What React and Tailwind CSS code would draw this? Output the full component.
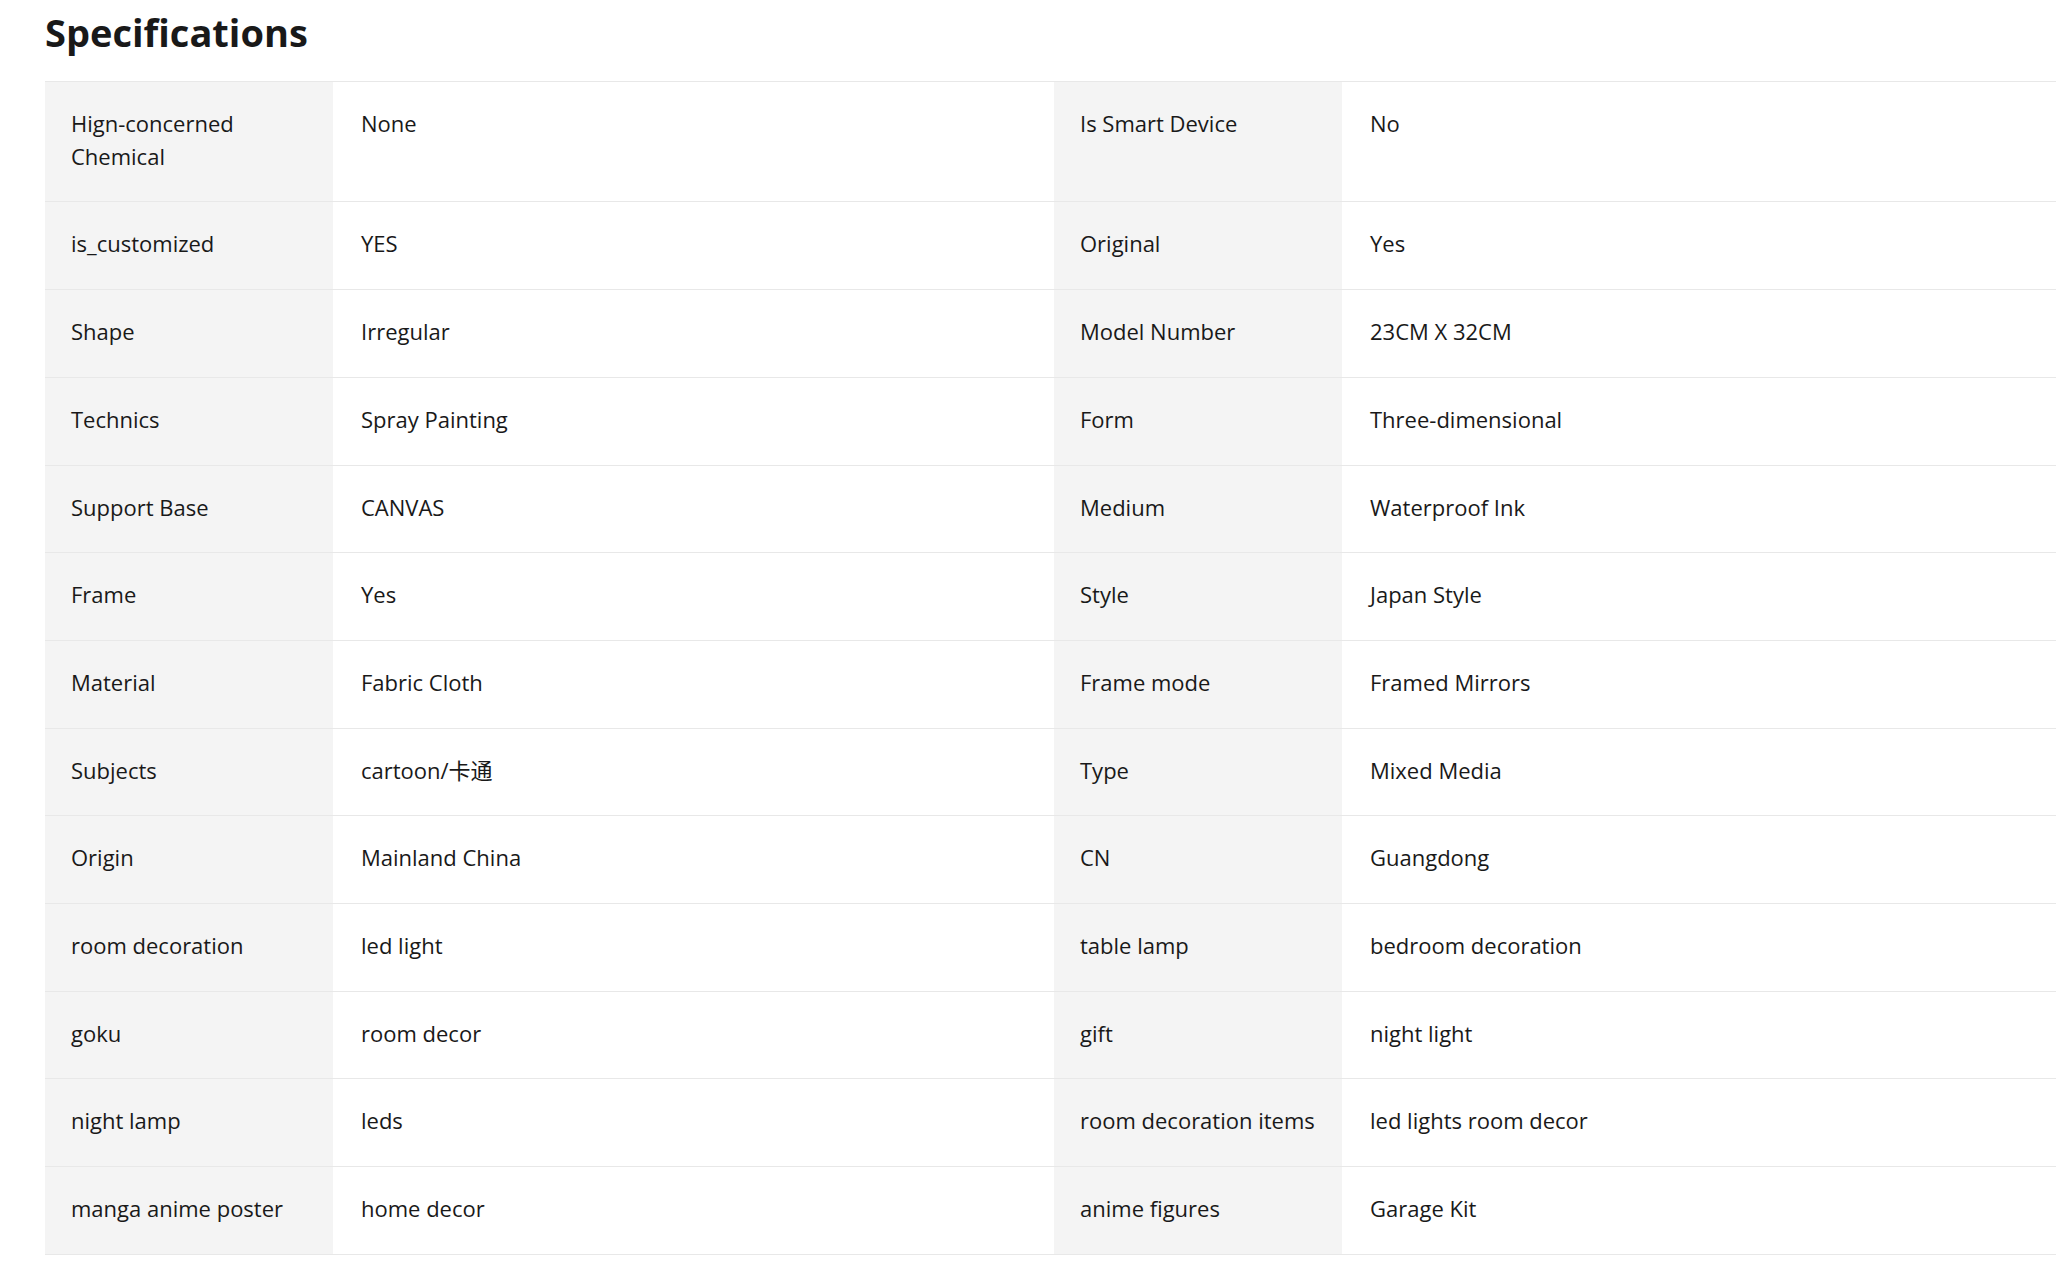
const SPECS = [
  ['Hign-concerned Chemical', 'None', 'Is Smart Device', 'No'],
  ['is_customized', 'YES', 'Original', 'Yes'],
  ['Shape', 'Irregular', 'Model Number', '23CM X 32CM'],
  ['Technics', 'Spray Painting', 'Form', 'Three-dimensional'],
  ['Support Base', 'CANVAS', 'Medium', 'Waterproof Ink'],
  ['Frame', 'Yes', 'Style', 'Japan Style'],
  ['Material', 'Fabric Cloth', 'Frame mode', 'Framed Mirrors'],
  ['Subjects', 'cartoon/卡通', 'Type', 'Mixed Media'],
  ['Origin', 'Mainland China', 'CN', 'Guangdong'],
  ['room decoration', 'led light', 'table lamp', 'bedroom decoration'],
  ['goku', 'room decor', 'gift', 'night light'],
  ['night lamp', 'leds', 'room decoration items', 'led lights room decor'],
  ['manga anime poster', 'home decor', 'anime figures', 'Garage Kit'],
]

function Cell({ children, label }) {
  return (
    <div
      className={
        label
          ? 'w-[288px] shrink-0 bg-[#f4f4f4] pl-[26px] pr-4 pt-[25px] pb-[29px]'
          : 'w-[721px] shrink-0 bg-white pl-[28px] pr-4 pt-[25px] pb-[29px]'
      }
    >
      {children}
    </div>
  )
}

export default function App() {
  return (
    <div
      className="min-h-screen w-full overflow-hidden bg-white text-[#191919]"
      style={{ fontFamily: '"Open Sans", "Noto Sans CJK SC", sans-serif' }}
    >
      <div className="pl-[45px]">
        <h2 className="pt-[6px] text-[38px] font-bold leading-[52px]">Specifications</h2>
        <div className="mt-[23px] w-[2018px] border-b border-[#e8e8e8] text-[22px] leading-[32.7px]">
          {SPECS.map(([k1, v1, k2, v2]) => (
            <div key={k1} className="flex border-t border-[#e8e8e8]">
              <Cell label>{k1}</Cell>
              <Cell>{v1}</Cell>
              <Cell label>{k2}</Cell>
              <Cell>{v2}</Cell>
            </div>
          ))}
        </div>
      </div>
    </div>
  )
}
